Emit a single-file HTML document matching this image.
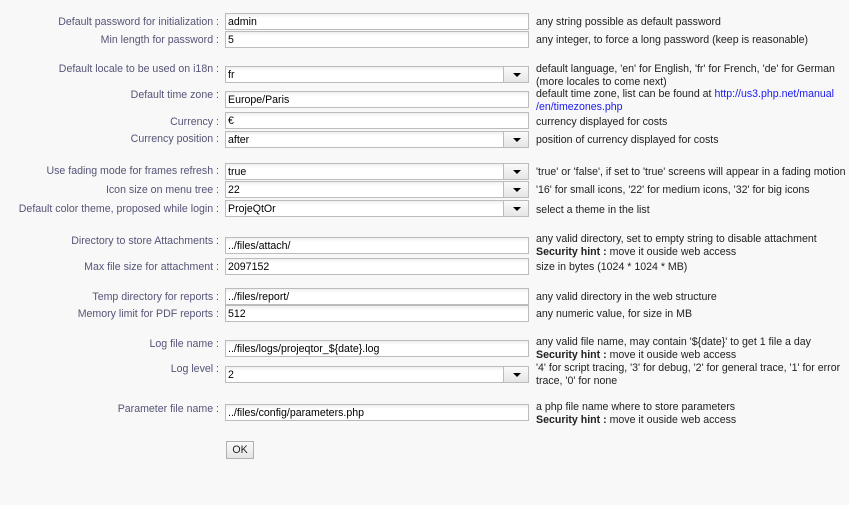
<!DOCTYPE html>
<html><head><meta charset="utf-8"><style>
body{margin:0;width:849px;height:505px;background:#f8f8f8;font-family:"Liberation Sans",sans-serif;font-size:10.6px;position:relative;overflow:hidden}
.l{position:absolute;right:630px;color:#555577;white-space:nowrap;line-height:13px;margin-top:1px}
.d{position:absolute;left:536px;color:#222;line-height:12.5px;white-space:nowrap;margin-top:1px}
.i{position:absolute;left:225px;height:15px;border:1px solid #bcbcbc;background:linear-gradient(#efefef,#fff 4px);color:#000;line-height:17px;padding-left:2px;width:300px;overflow:hidden}
.s .b{position:absolute;right:0;top:0;width:24px;height:15px;border-left:1px solid #bcbcbc;background:linear-gradient(#fafafa,#e6e6e6)}
.s .b:after{content:"";position:absolute;left:9px;top:6px;border-left:4px solid transparent;border-right:4px solid transparent;border-top:4px solid #000}
a{color:#1a1aee;text-decoration:none}
</style></head><body>
<div class="i" style="top:-17px"></div>

<div class="l" style="top:15px">Default password for initialization :</div><div class="i" style="top:13px">admin</div><div class="d" style="top:15px">any string possible as default password</div>
<div class="l" style="top:33px">Min length for password :</div><div class="i" style="top:31px">5</div><div class="d" style="top:33px">any integer, to force a long password (keep is reasonable)</div>

<div class="l" style="top:62px">Default locale to be used on i18n :</div><div class="i s" style="top:66px">fr<span class="b"></span></div><div class="d" style="top:62px">default language, 'en' for English, 'fr' for French, 'de' for German<br>(more locales to come next)</div>
<div class="l" style="top:88px">Default time zone :</div><div class="i" style="top:91px">Europe/Paris</div><div class="d" style="top:87px">default time zone, list can be found at <a>http://us3.php.net/manual</a><br><a>/en/timezones.php</a></div>
<div class="l" style="top:115px">Currency :</div><div class="i" style="top:112px">€</div><div class="d" style="top:115px">currency displayed for costs</div>
<div class="l" style="top:132px">Currency position :</div><div class="i s" style="top:131px">after<span class="b"></span></div><div class="d" style="top:133px">position of currency displayed for costs</div>

<div class="l" style="top:164px">Use fading mode for frames refresh :</div><div class="i s" style="top:163px">true<span class="b"></span></div><div class="d" style="top:165px">'true' or 'false', if set to 'true' screens will appear in a fading motion</div>
<div class="l" style="top:183px">Icon size on menu tree :</div><div class="i s" style="top:181px">22<span class="b"></span></div><div class="d" style="top:183px">'16' for small icons, '22' for medium icons, '32' for big icons</div>
<div class="l" style="top:202px">Default color theme, proposed while login :</div><div class="i s" style="top:200px">ProjeQtOr<span class="b"></span></div><div class="d" style="top:203px">select a theme in the list</div>

<div class="l" style="top:234px">Directory to store Attachments :</div><div class="i" style="top:237px">../files/attach/</div><div class="d" style="top:232px">any valid directory, set to empty string to disable attachment<br><b>Security hint :</b> move it ouside web access</div>
<div class="l" style="top:260px">Max file size for attachment :</div><div class="i" style="top:258px">2097152</div><div class="d" style="top:260px">size in bytes (1024 * 1024 * MB)</div>

<div class="l" style="top:290px">Temp directory for reports :</div><div class="i" style="top:288px">../files/report/</div><div class="d" style="top:290px">any valid directory in the web structure</div>
<div class="l" style="top:307px">Memory limit for PDF reports :</div><div class="i" style="top:305px">512</div><div class="d" style="top:307px">any numeric value, for size in MB</div>

<div class="l" style="top:337px">Log file name :</div><div class="i" style="top:340px">../files/logs/projeqtor_${date}.log</div><div class="d" style="top:335px">any valid file name, may contain '${date}' to get 1 file a day<br><b>Security hint :</b> move it ouside web access</div>
<div class="l" style="top:362px">Log level :</div><div class="i s" style="top:366px">2<span class="b"></span></div><div class="d" style="top:361px">'4' for script tracing, '3' for debug, '2' for general trace, '1' for error<br>trace, '0' for none</div>

<div class="l" style="top:402px">Parameter file name :</div><div class="i" style="top:404px">../files/config/parameters.php</div><div class="d" style="top:400px">a php file name where to store parameters<br><b>Security hint :</b> move it ouside web access</div>

<div style="position:absolute;left:226px;top:441px;width:26px;height:16px;border:1px solid #b0b0b0;background:linear-gradient(#fafafa,#e4e4e4);text-align:center;line-height:17px;color:#222">OK</div>
</body></html>
